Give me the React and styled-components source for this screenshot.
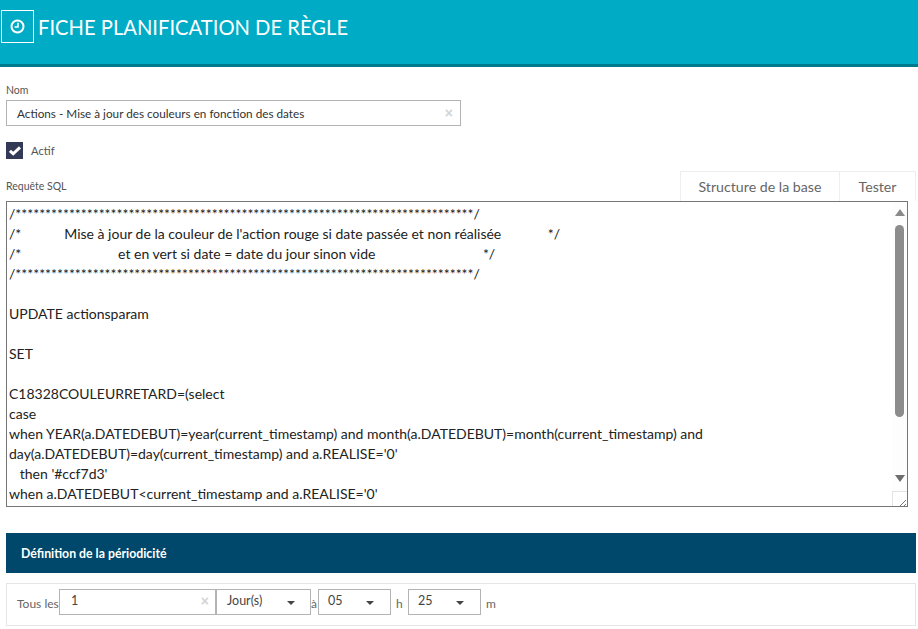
import React from "react";
import styled, { createGlobalStyle } from "styled-components";

const Global = createGlobalStyle`
  html, body {
    margin: 0;
    padding: 0;
    background: #fff;
    overflow: hidden;
  }
  body {
    font-family: Lato, "Liberation Sans", sans-serif;
    color: #555;
  }
`;

const STARS = "*".repeat(77);
const gap = (n) => "\u00a0".repeat(n);

const SQL = `/${STARS}/
/*${gap(12)}Mise à jour de la couleur de l'action rouge si date passée et non réalisée${gap(13)}*/
/*${gap(27)}et en vert si date = date du jour sinon vide${gap(30)}*/
/${STARS}/

UPDATE actionsparam

SET

C18328COULEURRETARD=(select
case
when YEAR(a.DATEDEBUT)=year(current_timestamp) and month(a.DATEDEBUT)=month(current_timestamp) and
day(a.DATEDEBUT)=day(current_timestamp) and a.REALISE='0'
   then '#ccf7d3'
when a.DATEDEBUT<current_timestamp and a.REALISE='0'`;

const Page = styled.div`
  width: 918px;
  height: 629px;
  overflow: hidden;
`;

const Header = styled.header`
  box-sizing: border-box;
  height: 67px;
  background: #00abc6;
  border-bottom: 3px solid #007a8c;
  display: flex;
  align-items: flex-start;
  padding: 10px 0 0 1px;
  gap: 4px;
`;

const IconBox = styled.div`
  width: 33px;
  height: 33px;
  box-sizing: border-box;
  border: 1px solid #fff;
  display: flex;
  align-items: center;
  justify-content: center;
  color: #fff;
`;

const Title = styled.h1`
  margin: 0;
  font-size: 20.2px;
  line-height: 35px;
  font-weight: 400;
  color: #fff;
`;

const Content = styled.main`
  padding: 16px 2px 0 6px;
`;

const Label = styled.div`
  font-size: 10.5px;
  line-height: 14px;
  color: #555;
`;

const TextField = styled.div`
  box-sizing: border-box;
  width: ${(p) => p.$width}px;
  height: 26px;
  margin-top: 3px;
  border: 1px solid #b3b3b3;
  padding: 0 7px 0 10px;
  display: flex;
  align-items: center;
  justify-content: space-between;
  font-size: 11.75px;
  color: #333;
`;

const Clear = styled.span`
  color: #d4d4d4;
  font-size: 14px;
  font-weight: 700;
  font-family: "Liberation Sans", sans-serif;
  line-height: 1;
`;

const CheckRow = styled.div`
  display: flex;
  align-items: center;
  gap: 8px;
  margin-top: 16px;
  font-size: 11.2px;
  color: #555;
`;

const Check = styled.span`
  width: 17px;
  height: 17px;
  background: #333a56;
  display: flex;
  align-items: center;
  justify-content: center;
`;

const SqlHead = styled.div`
  display: flex;
  align-items: flex-end;
  justify-content: space-between;
  margin-top: 12px;
`;

const SqlLabel = styled(Label)`
  padding-bottom: 8px;
`;

const Tabs = styled.div`
  display: flex;
`;

const Tab = styled.div`
  height: 30px;
  box-sizing: border-box;
  width: ${(p) => p.$width}px;
  border: 1px solid #eee;
  border-bottom: none;
  margin-left: -1px;
  display: flex;
  align-items: center;
  justify-content: center;
  font-size: 14.2px;
  color: #666;
`;

const SqlBox = styled.div`
  box-sizing: border-box;
  width: 902px;
  height: 306px;
  border: 1px solid #767676;
  display: flex;
  overflow: hidden;
`;

const SqlText = styled.pre`
  flex: 1;
  margin: 0;
  padding: 2px 0 0 2px;
  font-family: Lato, "Liberation Sans", sans-serif;
  font-size: 14px;
  line-height: 20px;
  color: #222;
  white-space: pre-wrap;
  overflow: hidden;
`;

const Scrollbar = styled.div`
  width: 15px;
  background: #fdfdfd;
  display: flex;
  flex-direction: column;
  align-items: center;
  padding-top: 7px;
  position: relative;
`;

const Arrow = styled.span`
  width: 0;
  height: 0;
  border-left: 5px solid transparent;
  border-right: 5px solid transparent;
  ${(p) =>
    p.$down
      ? "border-top: 7px solid #6e6e6e; margin-top: 58px;"
      : "border-bottom: 7px solid #8a8a8a;"}
`;

const Thumb = styled.div`
  width: 9px;
  height: 192px;
  margin-top: 9px;
  border-radius: 5px;
  background: #8c8c8c;
`;

const Grip = styled.div`
  position: absolute;
  right: 0;
  bottom: 0;
  width: 15px;
  height: 15px;
  box-sizing: border-box;
  border: 1px solid #e4e4e4;
  border-right: none;
  border-bottom: none;
  background: #fff;
`;

const SectionBar = styled.div`
  width: 910px;
  height: 40px;
  margin-top: 26px;
  background: #00486b;
  display: flex;
  align-items: center;
  padding-left: 15px;
  box-sizing: border-box;
  font-size: 12.3px;
  font-weight: 700;
  color: #fff;
`;

const Period = styled.div`
  box-sizing: border-box;
  width: 910px;
  height: 43px;
  margin-top: 10px;
  border: 1px solid #e6e6e6;
  padding: 5px 0 0 10px;
  display: flex;
  align-items: flex-start;
  font-size: 12px;
  color: #666;
`;

const PeriodText = styled.span`
  line-height: 30px;
  width: ${(p) => p.$width}px;
  margin-left: ${(p) => p.$left || 0}px;
  flex: none;
  white-space: nowrap;
`;

const Field = styled.div`
  box-sizing: border-box;
  width: ${(p) => p.$width}px;
  height: 26px;
  flex: none;
  border: 1px solid #b3b3b3;
  display: flex;
  align-items: center;
  justify-content: space-between;
  padding: 0 ${(p) => p.$right}px 3px ${(p) => p.$left}px;
  font-size: 12.5px;
  color: #444;
  background: #fff;
`;

const Caret = styled.span`
  width: 0;
  height: 0;
  margin-top: 5px;
  border-left: 4px solid transparent;
  border-right: 4px solid transparent;
  border-top: 4px solid #444;
`;

const ClockIcon = () => (
  <svg width="15" height="15" viewBox="0 0 15 15" fill="none" stroke="currentColor">
    <circle cx="7.5" cy="7.5" r="6" strokeWidth="2" />
    <path d="M8 3.8V8H4.6" strokeWidth="1.5" />
  </svg>
);

const CheckIcon = () => (
  <svg width="12" height="10" viewBox="0 0 12 10" fill="none" stroke="#fff" strokeWidth="3">
    <path d="M1 4.8 4.2 7.8 11 1.4" />
  </svg>
);

const GripIcon = () => (
  <svg width="14" height="14" viewBox="0 0 14 14" fill="none" stroke="#777" strokeWidth="1">
    <path d="M13 6 6 13M13 10 10 13" />
  </svg>
);

export default function App() {
  return (
    <Page>
      <Global />
      <Header>
        <IconBox>
          <ClockIcon />
        </IconBox>
        <Title>FICHE PLANIFICATION DE RÈGLE</Title>
      </Header>
      <Content>
        <Label>Nom</Label>
        <TextField $width={455}>
          Actions - Mise à jour des couleurs en fonction des dates
          <Clear>×</Clear>
        </TextField>
        <CheckRow>
          <Check>
            <CheckIcon />
          </Check>
          Actif
        </CheckRow>
        <SqlHead>
          <SqlLabel>Requête SQL</SqlLabel>
          <Tabs>
            <Tab $width={160}>Structure de la base</Tab>
            <Tab $width={77}>Tester</Tab>
          </Tabs>
        </SqlHead>
        <SqlBox>
          <SqlText>{SQL}</SqlText>
          <Scrollbar>
            <Arrow />
            <Thumb />
            <Arrow $down />
            <Grip>
              <GripIcon />
            </Grip>
          </Scrollbar>
        </SqlBox>
        <SectionBar>Définition de la périodicité</SectionBar>
        <Period>
          <PeriodText $width={42}>Tous les</PeriodText>
          <Field $width={157} $left={11} $right={6}>
            1
            <Clear>×</Clear>
          </Field>
          <Field $width={95} $left={10} $right={15}>
            Jour(s)
            <Caret />
          </Field>
          <PeriodText $width={7}>à</PeriodText>
          <Field $width={73} $left={9} $right={16}>
            05
            <Caret />
          </Field>
          <PeriodText $width={12} $left={5}>h</PeriodText>
          <Field $width={73} $left={9} $right={16}>
            25
            <Caret />
          </Field>
          <PeriodText $width={12} $left={5}>m</PeriodText>
        </Period>
      </Content>
    </Page>
  );
}
